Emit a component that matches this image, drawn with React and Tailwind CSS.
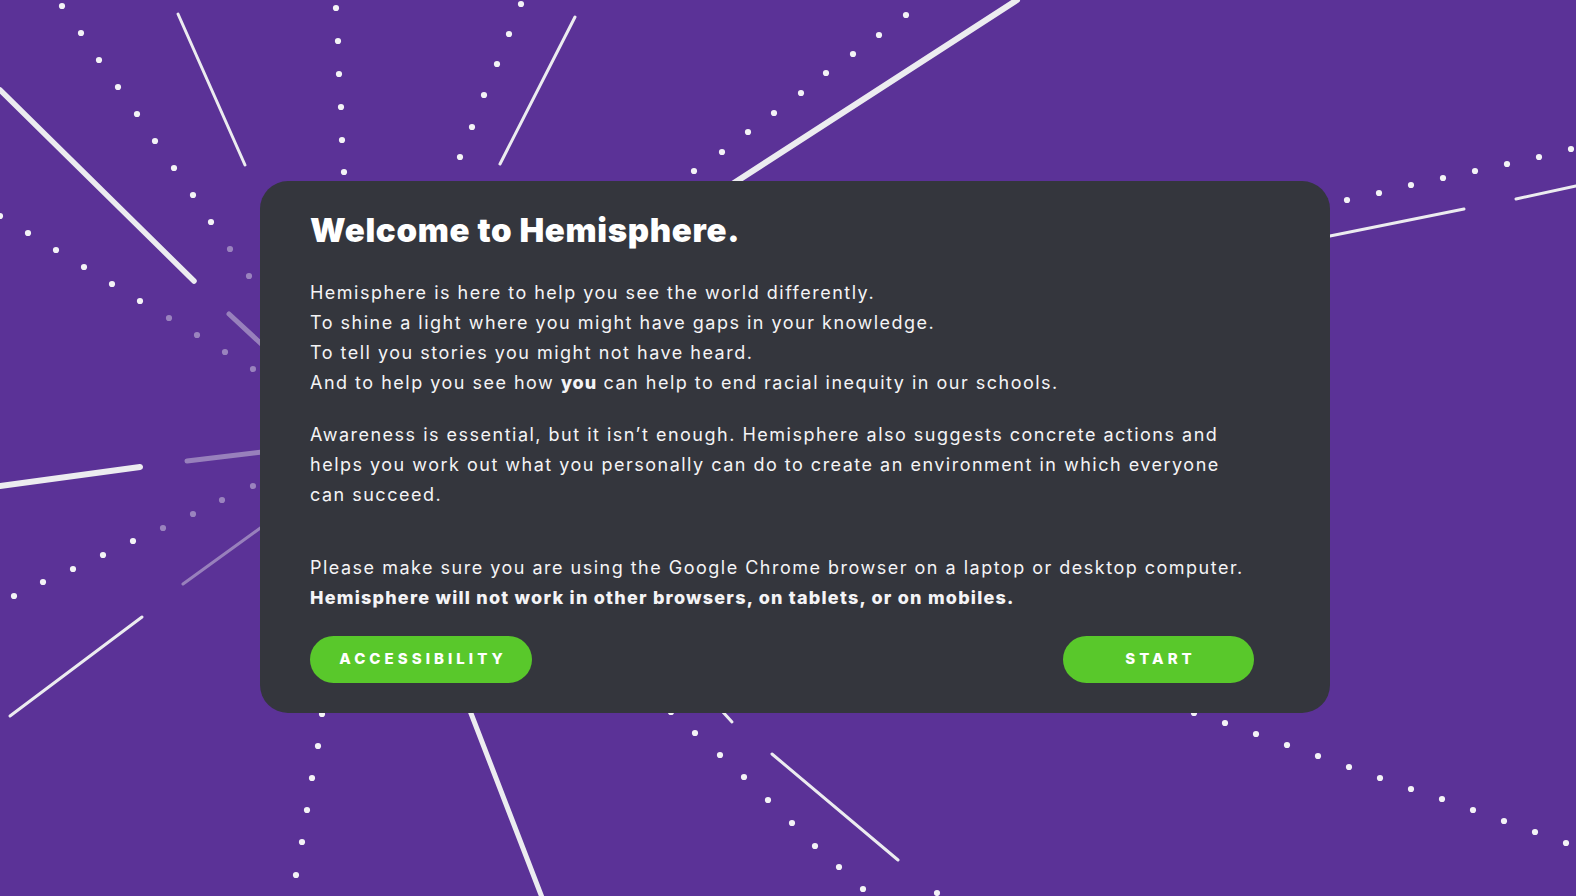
import React from "react";

// Radiating burst drawn behind the welcome card.
const LINE = "#ececf0";
const FADE = 0.42;

// [x1, y1, x2, y2, strokeWidth, faded]
const LINES = [
  [0, 90, 194, 281, 5.5, false],
  [178, 14, 245, 165, 3, false],
  [229, 314, 270, 352, 5, true],
  [0, 486, 140, 467, 6, false],
  [187, 461, 270, 451, 5, true],
  [183, 584, 270, 521, 3, true],
  [10, 716, 142, 617, 3, false],
  [575, 17, 500, 164, 3, false],
  [1017, 0, 700, 205, 6, false],
  [1320, 238, 1464, 209, 3, false],
  [1516, 199, 1576, 186, 3, false],
  [462, 690, 543, 900, 5, false],
  [712, 700, 732, 722, 3, false],
  [772, 754, 898, 860, 3, false],
];

// Dotted rays: list of centres, with the index from which dots fade out.
const DOTS = [
  { pts: [[62, 6], [81, 33], [99, 60], [118, 87], [137, 114], [155, 141], [174, 168], [193, 195], [211, 222], [230, 249], [249, 276]], fadeFrom: 9 },
  { pts: [[0, 216], [28, 233], [56, 250], [84, 267], [112, 284], [140, 301], [169, 318], [197, 335], [225, 352], [253, 369]], fadeFrom: 6 },
  { pts: [[336, 8], [338, 41], [339, 74], [341, 107], [342, 140], [344, 172]], fadeFrom: 99 },
  { pts: [[322, 714], [318, 746], [312, 778], [307, 810], [302, 842], [296, 875]], fadeFrom: 99 },
  { pts: [[521, 4], [509, 34], [497, 64], [484, 95], [472, 127], [460, 157]], fadeFrom: 99 },
  { pts: [[906, 15], [879, 35], [853, 54], [826, 73], [801, 93], [774, 113], [748, 132], [722, 152], [694, 171]], fadeFrom: 99 },
  { pts: [[1347, 200], [1379, 193], [1411, 185], [1443, 178], [1475, 171], [1507, 164], [1539, 157], [1571, 149]], fadeFrom: 99 },
  { pts: [[14, 596], [43, 582], [73, 569], [103, 555], [133, 541], [163, 528], [193, 514], [222, 500], [253, 486]], fadeFrom: 5 },
  { pts: [[671, 712], [695, 733], [720, 755], [744, 777], [768, 800], [792, 823], [815, 846], [839, 867], [863, 889]], fadeFrom: 99 },
  { pts: [[1194, 713], [1225, 723], [1256, 734], [1287, 745], [1318, 756], [1349, 767], [1380, 778], [1411, 789], [1442, 799], [1473, 810], [1504, 821], [1535, 832], [1566, 843]], fadeFrom: 99 },
  { pts: [[937, 893]], fadeFrom: 99 },
];

function Burst() {
  return (
    <svg
      className="absolute inset-0 h-full w-full"
      viewBox="0 0 1576 896"
      preserveAspectRatio="xMidYMid slice"
      aria-hidden="true"
    >
      {LINES.map(([x1, y1, x2, y2, w, faded], i) => (
        <line
          key={`l${i}`}
          x1={x1}
          y1={y1}
          x2={x2}
          y2={y2}
          stroke={LINE}
          strokeWidth={w}
          strokeLinecap="round"
          opacity={faded ? FADE : 1}
        />
      ))}
      {DOTS.map((ray, r) =>
        ray.pts.map(([cx, cy], i) => (
          <circle
            key={`d${r}-${i}`}
            cx={cx}
            cy={cy}
            r={3.1}
            fill="#f3f3f6"
            opacity={i >= ray.fadeFrom ? FADE : 1}
          />
        ))
      )}
    </svg>
  );
}

function PillButton({ children, className }) {
  return (
    <button
      type="button"
      className={`flex h-[47px] items-center justify-center rounded-full bg-[#59c82b] text-[15px] font-extrabold uppercase tracking-[0.27em] text-white ${className}`}
    >
      <span className="pl-[0.27em]">{children}</span>
    </button>
  );
}

export default function App() {
  return (
    <div className="relative flex h-screen w-full items-center justify-center overflow-hidden bg-[#5b3297] pl-[14px] pb-[3px] font-['Inter',sans-serif]">
      <Burst />

      <section className="relative z-10 w-[1070px] rounded-[28px] bg-[#34363d] pb-[30px] pl-[50px] pr-[76px] pt-[29px] text-white">
        <h1 className="text-[33px] font-black leading-[40px] tracking-[0.02em]">
          Welcome to Hemisphere.
        </h1>

        <div className="whitespace-nowrap text-[18px] leading-[30px] tracking-[0.083em] text-[#f4f4f6]">
          <p className="mt-[28px]">
            Hemisphere is here to help you see the world differently.
            <br />
            To shine a light where you might have gaps in your knowledge.
            <br />
            To tell you stories you might not have heard.
            <br />
            And to help you see how <strong className="font-extrabold tracking-[0.05em]">you</strong> can help to end racial inequity in our schools.
          </p>

          <p className="mt-[22px]">
            Awareness is essential, but it isn’t enough. Hemisphere also suggests concrete actions and
            <br />
            helps you work out what you personally can do to create an environment in which everyone
            <br />
            can succeed.
          </p>

          <p className="mt-[43px]">
            Please make sure you are using the Google Chrome browser on a laptop or desktop computer.
            <br />
            <strong className="font-extrabold tracking-[0.068em]">
              Hemisphere will not work in other browsers, on tablets, or on mobiles.
            </strong>
          </p>
        </div>

        <div className="mt-[23px] flex items-center justify-between">
          <PillButton className="w-[222px]">Accessibility</PillButton>
          <PillButton className="w-[191px]">Start</PillButton>
        </div>
      </section>
    </div>
  );
}
